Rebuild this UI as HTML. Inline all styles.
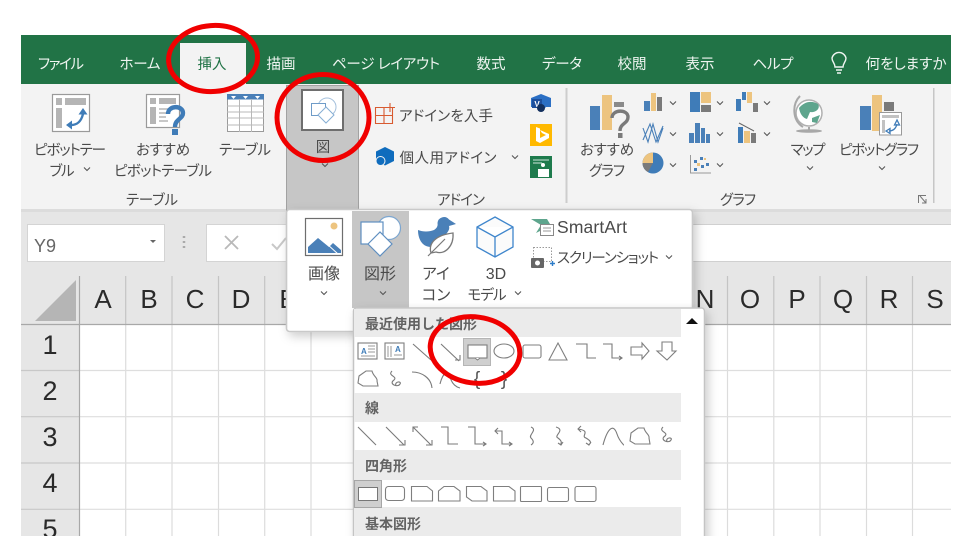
<!DOCTYPE html>
<html lang="ja"><head><meta charset="utf-8"><title>Excel 挿入 図形</title>
<style>
html,body{margin:0;padding:0;background:#fff;width:975px;height:556px;overflow:hidden}
svg{display:block;filter:blur(.35px)}
text{font-family:"Liberation Sans","Noto Sans CJK JP",sans-serif;font-feature-settings:"palt"}
.t{font-size:14.5px;fill:#eef4f0;text-anchor:middle}
.r{font-size:14.5px;fill:#4a4a4a;text-anchor:middle}
.p{font-size:16px;fill:#4a4a4a;text-anchor:middle}
.h{font-size:26px;fill:#2a2a2a;text-anchor:middle}
.s{font-size:14px;font-weight:700;fill:#636363}
.i{fill:none;stroke:#7a7a7a;stroke-width:1.1}
.b{fill:#fff;stroke:#7f7f7f;stroke-width:1.1}
</style></head><body>
<svg width="975" height="556" viewBox="0 0 975 556" xmlns="http://www.w3.org/2000/svg">
<defs>
<path id="c" d="M-3,-1.5L0,1.5L3,-1.5" fill="none" stroke="#555" stroke-width="1.1"/>
<clipPath id="f"><rect x="21" y="35" width="930" height="501"/></clipPath>
<filter id="sh" x="-10%" y="-10%" width="125%" height="125%"><feDropShadow dx="3" dy="4" stdDeviation="5" flood-color="#000" flood-opacity=".2"/></filter>
</defs>
<rect width="975" height="556" fill="#fff"/>
<g clip-path="url(#f)">
<!-- title/tabs -->
<rect x="21" y="35" width="930" height="49" fill="#217346"/>
<rect x="180" y="43" width="66" height="41" fill="#f3f3f3"/>
<text class="t" x="61" y="69" textLength="46">ファイル</text>
<text class="t" x="140" y="69" textLength="41">ホーム</text>
<text class="t" x="212" y="69" style="fill:#217346">挿入</text>
<text class="t" x="281" y="69">描画</text>
<text class="t" x="386" y="69" textLength="108">ページ レイアウト</text>
<text class="t" x="491" y="69">数式</text>
<text class="t" x="562" y="69" textLength="40">データ</text>
<text class="t" x="632" y="69">校閲</text>
<text class="t" x="700" y="69">表示</text>
<text class="t" x="773" y="69" textLength="41">ヘルプ</text>
<text class="t" x="906" y="69" textLength="81">何をしますか</text>
<path d="M835,67C835,63 832,62 832,58A7.2,7.2 0 0 1 846,58C846,62 843,63 843,67ZM836,70H842M837,73H841" fill="none" stroke="#f0f5f2" stroke-width="1.4"/>
<!-- ribbon -->
<rect x="21" y="84" width="930" height="125" fill="#f3f3f3"/>
<rect x="21" y="209" width="930" height="3" fill="#dcdcdc"/>
<rect x="21" y="212" width="930" height="112" fill="#e6e6e6"/>
<!-- pivot table -->
<rect x="52.5" y="94.5" width="37" height="37" fill="#fff" stroke="#9a9a9a" stroke-width="1.2"/>
<path d="M56,98H62V105H56ZM65,98H86V105H65ZM56,108H62V128H56Z" fill="#b5b5b5"/>
<path d="M71,125C77,125 81,122 83,114" fill="none" stroke="#3f7cb8" stroke-width="2.4"/>
<path d="M66,125L72,120.500V129.500ZM83,108L78.500,114.500H87.500Z" fill="#3f7cb8"/>
<!-- recommended pivot -->
<rect x="146.5" y="94.5" width="33" height="33" fill="#fff" stroke="#9a9a9a" stroke-width="1.2"/>
<path d="M150,98H156V104H150ZM159,98H176V104H159ZM150,107H156V124H150Z" fill="#b5b5b5"/>
<path d="M159,109H168M159,113H166M159,117H166M159,121H168" stroke="#b5b5b5" stroke-width="1.5"/>
<path d="M168,114C168,105 183,105 183,113C183,119 175,119 175,127" fill="none" stroke="#3f7cb8" stroke-width="4.400"/>
<rect x="172" y="129" width="6" height="6" fill="#3f7cb8"/>
<!-- table -->
<rect x="227.5" y="94.5" width="36" height="37" fill="#fff" stroke="#9a9a9a"/>
<rect x="227" y="94" width="37" height="5.5" fill="#4a80b8"/>
<path d="M231,96h5l-2.500,3zM243,96h5l-2.500,3zM255,96h5l-2.500,3z" fill="#fff"/>
<path d="M227,106H264M227,112H264M227,118H264M227,125H264M239.500,99V132M251.500,99V132" stroke="#b8b8b8"/>
<text class="r" x="70" y="155" textLength="72">ピボットテー</text>
<text class="r" x="62" y="176" textLength="25">ブル</text><use href="#c" x="87" y="169"/>
<text class="r" x="163" y="155" textLength="54">おすすめ</text>
<text class="r" x="163" y="176" textLength="98">ピボットテーブル</text>
<text class="r" x="245" y="155" textLength="52">テーブル</text>
<text class="r" x="152" y="205" textLength="52">テーブル</text>
<!-- 図 button -->
<rect x="286.500" y="85.500" width="72" height="126" fill="#c6c6c6" stroke="#a2a2a2"/>
<rect x="302" y="90" width="41" height="40" fill="#fff" stroke="#6e6e6e" stroke-width="2"/>
<circle cx="327" cy="107" r="9" fill="none" stroke="#a4c0dc"/>
<rect x="311.500" y="103.500" width="14" height="12" fill="#fff" stroke="#6f9cc8"/>
<path d="M318,115L326,107L334,115L326,123Z" fill="#fff" stroke="#86aed4"/>
<text class="r" x="323" y="152">図</text>
<use href="#c" x="325" y="165"/>
<!-- addins -->
<path d="M375.500,107.500H392.500V123.500H375.500ZM384,107.500V123.500M375.500,115.500H392.500" fill="none" stroke="#d85a30" stroke-width="1.100"/>
<path d="M390,103V112M385.500,107.500H395" fill="none" stroke="#d85a30" stroke-width="1.100"/>
<text class="r" x="446" y="121" textLength="94">アドインを入手</text>
<path d="M385,147L394,151.500V161L385,165.500L376,161V151.500Z" fill="#0f6cbd"/>
<circle cx="380.500" cy="161" r="4.500" fill="#0f6cbd" stroke="#f3f3f3"/>
<text class="r" x="448" y="163" textLength="97">個人用アドイン</text><use href="#c" x="515" y="157"/>
<path d="M531,98L541,94L551,98V107H546L541,112L536,107H531Z" fill="#2b6fc4"/>
<rect x="532" y="99" width="10" height="9" fill="#1d4f9c"/>
<text x="537" y="107" style="font-size:8px;font-weight:700;fill:#fff;text-anchor:middle">V</text>
<circle cx="541" cy="108" r="4" fill="#13305e"/>
<rect x="530" y="124" width="22" height="22" fill="#ffb900"/>
<path d="M536,127L540,128.500V138L546,135L542,133L540,130L549,134V138L540,143L536,141Z" fill="#fff"/>
<rect x="530" y="156" width="22" height="22" fill="#1e7b4d"/>
<path d="M533,160H549M533,163H542" stroke="#cfe6da"/>
<circle cx="543" cy="165" r="2" fill="#fff"/><path d="M538,169H549V177H538Z" fill="#fff"/>
<text class="r" x="461" y="205" textLength="48">アドイン</text>
<rect x="565.500" y="88" width="2" height="115" fill="#cdcdcd"/>
<!-- charts -->
<rect x="590" y="106" width="10" height="24" fill="#4a80b8"/>
<rect x="602" y="95" width="10" height="35" fill="#edc47f"/>
<rect x="614" y="102" width="10" height="5" fill="#8a8a8a"/>
<path d="M612,118C612,109 628,109 628,117C628,124 620,123 620,131" fill="none" stroke="#7a7a7a" stroke-width="3.400"/>
<rect x="618" y="133" width="4.500" height="5" fill="#7a7a7a"/>
<text class="r" x="607" y="155" textLength="54">おすすめ</text>
<text class="r" x="607" y="176" textLength="36">グラフ</text>
<rect x="644" y="101" width="6" height="10" fill="#4a80b8"/><rect x="651" y="93" width="5" height="18" fill="#edc47f"/><rect x="657" y="97" width="5" height="14" fill="#7a7a7a"/>
<path d="M643,128L648,142L653,124L658,142L663,128M643,140L650,124L656,142L663,126" fill="none" stroke="#4a80b8" stroke-width="1.100"/>
<circle cx="653" cy="163" r="10.500" fill="#3f7cb8"/><path d="M653,163V152.500A10.500,10.500 0 0 0 642.500,163Z" fill="#edc47f"/><path d="M653,163H642.500A10.500,10.500 0 0 0 648,172Z" fill="#7a7a7a"/>
<use href="#c" x="673" y="103"/><use href="#c" x="673" y="134"/><use href="#c" x="673" y="165"/>
<rect x="690" y="92" width="10" height="20" fill="#3f7cb8"/><rect x="701" y="92" width="10" height="11" fill="#edc47f"/><rect x="701" y="105" width="10" height="7" fill="#7a7a7a"/>
<path d="M689,143V133H694V143ZM695,143V123H700V143ZM701,143V128H705V143ZM706,143V134H710V143Z" fill="#4a80b8"/>
<path d="M690.500,155V173H711" fill="none" stroke="#9a9a9a"/>
<path d="M694,160h3v3h-3zM701,165h3v3h-3zM694,168h3v3h-3zM706,163h3v3h-3zM700,157h3v3h-3z" fill="#4a80b8"/><path d="M697,163h3v3h-3zM704,158h2v2h-2z" fill="#edc47f"/>
<use href="#c" x="720" y="103"/><use href="#c" x="720" y="134"/><use href="#c" x="720" y="165"/>
<path d="M736,99h5v12h-5zM742,92h4v8h-4z" fill="#3f7cb8"/><path d="M747,92h5v11h-5z" fill="#edc47f"/><path d="M753,103h5v9h-5z" fill="#7a7a7a"/>
<path d="M738,127h5v16h-5z" fill="#3f7cb8"/><path d="M744,131h6v12h-6z" fill="#edc47f"/><path d="M751,133h5v10h-5z" fill="#7a7a7a"/>
<path d="M739,123L754,131" stroke="#666"/>
<use href="#c" x="767" y="103"/><use href="#c" x="767" y="134"/>
<text class="r" x="738" y="205" textLength="36">グラフ</text>
<!-- globe -->
<circle cx="809" cy="113" r="13" fill="#fff" stroke="#b0b0b0" stroke-width="1.500"/>
<path d="M799,108C804,102 811,100 818,104C821,109 815,113 810,112L807,119C803,118 800,114 799,108ZM812,118L820,115L817,123L812,122Z" fill="#5ea58d"/>
<path d="M800,96C792,104 792,120 803,127M809,127V130" fill="none" stroke="#a8a8a8" stroke-width="2"/>
<ellipse cx="809" cy="131" rx="13" ry="1.800" fill="#a8a8a8"/>
<text class="r" x="808" y="155" textLength="35">マップ</text>
<use href="#c" x="810" y="168"/>
<rect x="860" y="106" width="11" height="24" fill="#4a80b8"/><rect x="872" y="95" width="10" height="36" fill="#edc47f"/><rect x="884" y="102" width="10" height="9" fill="#7a7a7a"/>
<rect x="879.500" y="112.500" width="22" height="22.500" fill="#fff" stroke="#999"/>
<path d="M882,115H899V118H882ZM882,120H885V133H882Z" fill="#c2c2c2"/>
<path d="M889,131C894,131 896,128 897,124M886,131L890,128.500V133.500ZM897,120L894.500,125H899.500Z" fill="none" stroke="#3f7cb8" stroke-width="1.300"/>
<text class="r" x="879" y="155" textLength="80">ピボットグラフ</text>
<use href="#c" x="882" y="168"/>
<rect x="933" y="88" width="1.500" height="115" fill="#c6c6c6"/>
<path d="M918.500,203V195.500H926M920,196L926,203M922,203H926V199" fill="none" stroke="#777"/>
<!-- formula bar -->
<rect x="27.500" y="224.500" width="137" height="37" fill="#fff" stroke="#d4d4d4"/>
<text x="34" y="252" style="font-size:18px;fill:#666">Y9</text>
<path d="M150,240H156L153,243Z" fill="#666"/>
<path d="M184,236v2M184,241v2M184,246v2" stroke="#aaa" stroke-width="2.500"/>
<rect x="206.500" y="224.500" width="90" height="37" fill="#fff" stroke="#d4d4d4"/>
<path d="M225,236L238,249M238,236L225,249" stroke="#b9b9b9" stroke-width="1.800"/>
<path d="M272,244L277,249L286,238" fill="none" stroke="#c8c8c8" stroke-width="2"/>
<rect x="296" y="225" width="655" height="36" fill="#fff"/>
<path d="M296,224.500H951M296,261.500H951" stroke="#d0d0d0"/>
<!-- grid -->
<rect x="80" y="324" width="871" height="212" fill="#fff"/>
<rect x="21" y="324" width="59" height="212" fill="#e6e6e6"/>
<path d="M35,321H76V280Z" fill="#b5b5b5"/>
<path d="M125.700,324V536M172,324V536M218.500,324V536M264.700,324V536M311,324V536M357,324V536M403,324V536M450,324V536M496,324V536M542,324V536M588,324V536M635,324V536M681,324V536M727.500,324V536M773.800,324V536M820,324V536M866.500,324V536M912.500,324V536" stroke="#dcdcdc" stroke-width="1.200"/>
<path d="M125.700,276V324M172,276V324M218.500,276V324M264.700,276V324M727.500,276V324M773.800,276V324M820,276V324M866.500,276V324M912.500,276V324" stroke="#c4c4c4" stroke-width="1.200"/>
<path d="M80,370.500H951M80,416.700H951M80,463H951M80,509.300H951" stroke="#dedede" stroke-width="1.200"/>
<path d="M21,370.500H80M21,416.700H80M21,463H80M21,509.300H80" stroke="#c8c8c8" stroke-width="1.200"/>
<path d="M21,324.500H951M79.500,276V536" stroke="#a8a8a8" stroke-width="1.200"/>
<text class="h" x="103" y="308">A</text><text class="h" x="149" y="308">B</text><text class="h" x="195" y="308">C</text><text class="h" x="241" y="308">D</text><text class="h" x="288" y="308">E</text>
<text class="h" x="705" y="308">N</text><text class="h" x="750" y="308">O</text><text class="h" x="797" y="308">P</text><text class="h" x="843" y="308">Q</text><text class="h" x="889" y="308">R</text><text class="h" x="935" y="308">S</text>
<text class="h" x="50" y="354" style="font-size:27px">1</text><text class="h" x="50" y="400" style="font-size:27px">2</text><text class="h" x="50" y="446" style="font-size:27px">3</text><text class="h" x="50" y="492" style="font-size:27px">4</text><text class="h" x="50" y="538" style="font-size:27px">5</text>
<!-- popup 1 -->
<rect x="286.500" y="209.500" width="406" height="122" rx="3" fill="#fff" stroke="#c9c9c9" stroke-width="1.600" filter="url(#sh)"/>
<rect x="352" y="211" width="57" height="97" fill="#c6c6c6"/>
<rect x="305.500" y="218.500" width="37" height="37" fill="#fff" stroke="#6e6e6e" stroke-width="1.200"/>
<circle cx="334" cy="226" r="3.500" fill="#edc47f"/>
<path d="M308,253V247L318,238L329,247L333,243L341,250V253Z" fill="#4a80b8"/><path d="M327,244L338,254" stroke="#fff"/>
<text class="p" x="324" y="279">画像</text><use href="#c" x="324" y="293"/>
<circle cx="389" cy="228" r="11.500" fill="#fff" stroke="#7ca6d0" stroke-width="1.200"/>
<rect x="361" y="222" width="22" height="22" fill="#fff" stroke="#5f8fc0" stroke-width="1.200"/>
<path d="M368,244L380,232L392,244L380,256Z" fill="#fff" stroke="#5f8fc0" stroke-width="1.200"/>
<text class="p" x="380" y="279">図形</text><use href="#c" x="383" y="293"/>
<path d="M418,230C423,232 429,232 434,230C437,228 438,226 437.500,223A6.500,6.500 0 0 1 449,219.500L456,224L449,226C450,229 448,232 446,234L436,241C435,245 433,247 431,247C423,247 418,240 418,230Z" fill="#4a80b8"/>
<path d="M431,253C428,243 436,235 453,233C454,246 445,255 436,252Z" fill="#fff" stroke="#7a7a7a" stroke-width="1.300"/><path d="M428,256L445,239" stroke="#7a7a7a" stroke-width="1.200"/>
<text class="r" x="436" y="279" style="font-size:15.500px">アイ</text><text class="r" x="436" y="300" style="font-size:15.500px">コン</text>
<path d="M495,217L513,227V247L495,257L477,247V227ZM477,227L495,237L513,227M495,237V257" fill="#fbfbfb" stroke="#3f86cc" stroke-width="1.300"/>
<text class="p" x="496" y="279">3D</text><text class="r" x="487" y="300" textLength="39">モデル</text><use href="#c" x="518" y="293"/>
<path d="M531,219H547L550,224H541L544,229L536,233L541,225Z" fill="#5ea58d"/>
<rect x="540.500" y="224.500" width="13" height="11" fill="#fff" stroke="#888"/><path d="M543,228H551M543,231H551" stroke="#999"/>
<text x="557" y="233" style="font-size:17.500px;fill:#4a4a4a" textLength="70">SmartArt</text>
<rect x="533.500" y="247.500" width="18" height="14" fill="none" stroke="#999" stroke-dasharray="1.500 1.500"/>
<rect x="531" y="258" width="13" height="10" rx="1" fill="#666"/><circle cx="537.500" cy="263" r="2.500" fill="#fff"/>
<path d="M550,263.500h5M552.500,261v5" stroke="#2c7cc8" stroke-width="1.400"/>
<text x="557" y="263" class="r" style="text-anchor:start" textLength="102">スクリーンショット</text><use href="#c" x="669" y="257"/>
<!-- popup 2 -->
<rect x="353.500" y="308" width="351" height="240" rx="3" fill="#fff" stroke="#c4c4c4" stroke-width="1.500" filter="url(#sh)"/>
<rect x="354" y="309" width="327" height="28" fill="#ebebeb"/>
<rect x="354" y="393" width="327" height="29" fill="#ebebeb"/>
<rect x="354" y="450" width="327" height="30" fill="#ebebeb"/>
<rect x="354" y="507" width="327" height="29" fill="#ebebeb"/>
<path d="M686,324H698L692,318Z" fill="#111"/>
<text class="s" x="365" y="329" style="font-feature-settings:normal">最近使用した図形</text>
<text class="s" x="365" y="413">線</text>
<text class="s" x="365" y="471" style="font-feature-settings:normal">四角形</text>
<text class="s" x="365" y="529" style="font-feature-settings:normal">基本図形</text>
<!-- row 1 -->
<rect x="463.500" y="338.500" width="27" height="27" fill="#cfcfcf" stroke="#b5b5b5"/>
<rect x="358" y="343" width="19" height="16" class="b"/><text x="361" y="354" style="font-size:8px;font-weight:700;fill:#3f7cb8">A</text><path d="M368,346h7M368,349h7M368,352h7M361,356h14" stroke="#999"/>
<rect x="385" y="343" width="19" height="16" class="b"/><text x="395" y="352" style="font-size:8px;font-weight:700;fill:#3f7cb8">A</text><path d="M388,346v11M391,346v11M402,355h-8" stroke="#999"/>
<path class="i" d="M413,344L431,360"/>
<path class="i" d="M441,344L459,361M455,360H460V355"/>
<rect x="468" y="345" width="19" height="13" class="b"/><path d="M475,358l2.500,2l2.500,-2" fill="#fff" stroke="#7f7f7f"/>
<ellipse cx="504" cy="351" rx="10" ry="7" class="b"/>
<rect x="523" y="345" width="18" height="13" rx="2" class="b"/>
<path class="b" d="M549,360L558,343L567,360Z"/>
<path class="i" d="M576,344H587V358H596"/>
<path class="i" d="M603,344H612V358H622M619,356L622,358L619,360"/>
<path class="b" d="M631,347H642V343L649,351L642,359V355H631Z"/>
<path class="b" d="M662,342H672V351H676L667,360L657,351H662Z"/>
<!-- row 2 -->
<path class="b" d="M359,376L366,371H372C373,376 378,378 377,381L378,386H363L358,383Z"/>
<path class="i" d="M392,371C387,376 398,376 394,380C388,384 398,388 400,384C402,381 394,381 396,386"/>
<path class="i" d="M412,372C422,372 431,378 432,388"/>
<path class="i" d="M440,384C443,372 448,370 450,377C452,384 456,387 460,388"/>
<text x="477" y="385" style="font-size:19px;fill:#555;text-anchor:middle">{</text>
<text x="504" y="385" style="font-size:19px;fill:#555;text-anchor:middle">}</text>
<!-- lines row -->
<path class="i" d="M358,427L376,445"/>
<path class="i" d="M386,427L404,445M399,445H405V440"/>
<path class="i" d="M413,427L431,445M413,432V427H418M426,445H432V440"/>
<path class="i" d="M441,427H448V444H458"/>
<path class="i" d="M468,427H475V444H486M483,442L486,444L483,446"/>
<path class="i" d="M495,431H502V444H512M498,428L495,431L498,434M509,442L512,444L509,446"/>
<path class="i" d="M531,427C538,430 528,435 531,438C534,441 534,443 531,445"/>
<path class="i" d="M556,427C566,430 553,436 558,438C562,441 562,443 560,445M558,443L561,445L563,442"/>
<path class="i" d="M578,429C592,431 580,436 586,438C591,441 592,443 588,445M581,426L578,429L581,432M586,443L589,445L591,442"/>
<path class="i" d="M603,445C607,430 613,422 617,434C620,443 625,445 623,445"/>
<path class="b" d="M631,433L638,428H644C645,433 650,435 649,438L650,444H635L630,441Z"/>
<path class="i" d="M663,427C658,432 669,432 665,436C659,440 669,444 671,440C673,437 665,437 667,442"/>
<!-- rect row -->
<rect x="354.500" y="480.500" width="27" height="27" fill="#cfcfcf" stroke="#a6a6a6"/>
<rect x="358.500" y="487.500" width="19" height="13" fill="#fff" stroke="#777"/>
<rect x="385.500" y="486.500" width="19" height="14" rx="3" class="b"/>
<path class="b" d="M411.500,486.500H427L432.500,491V501H411.500Z"/>
<path class="b" d="M438.500,501V491L444,486.500H454L460,491V501Z"/>
<path class="b" d="M466.500,486.500H481L487,491V501H472L466.500,497Z"/>
<path class="b" d="M493.500,501V486.500H509L515,491V501Z"/>
<rect x="520.500" y="486.500" width="21" height="15" rx="1" class="b"/>
<rect x="547.500" y="487.500" width="21" height="14" rx="2" class="b"/>
<rect x="575" y="486.500" width="21" height="15" rx="2" class="b"/>
<!-- red ellipses inside frame -->
<g fill="none" stroke="#f00000" stroke-width="5">
<ellipse cx="323" cy="117.500" rx="46" ry="43"/>
<ellipse cx="475" cy="350" rx="45" ry="33" transform="rotate(8 475 350)"/>
</g>
</g>
<ellipse cx="213" cy="58.500" rx="44.500" ry="33" transform="rotate(-4 213 58)" fill="none" stroke="#f00000" stroke-width="5"/>
</svg>
</body></html>
